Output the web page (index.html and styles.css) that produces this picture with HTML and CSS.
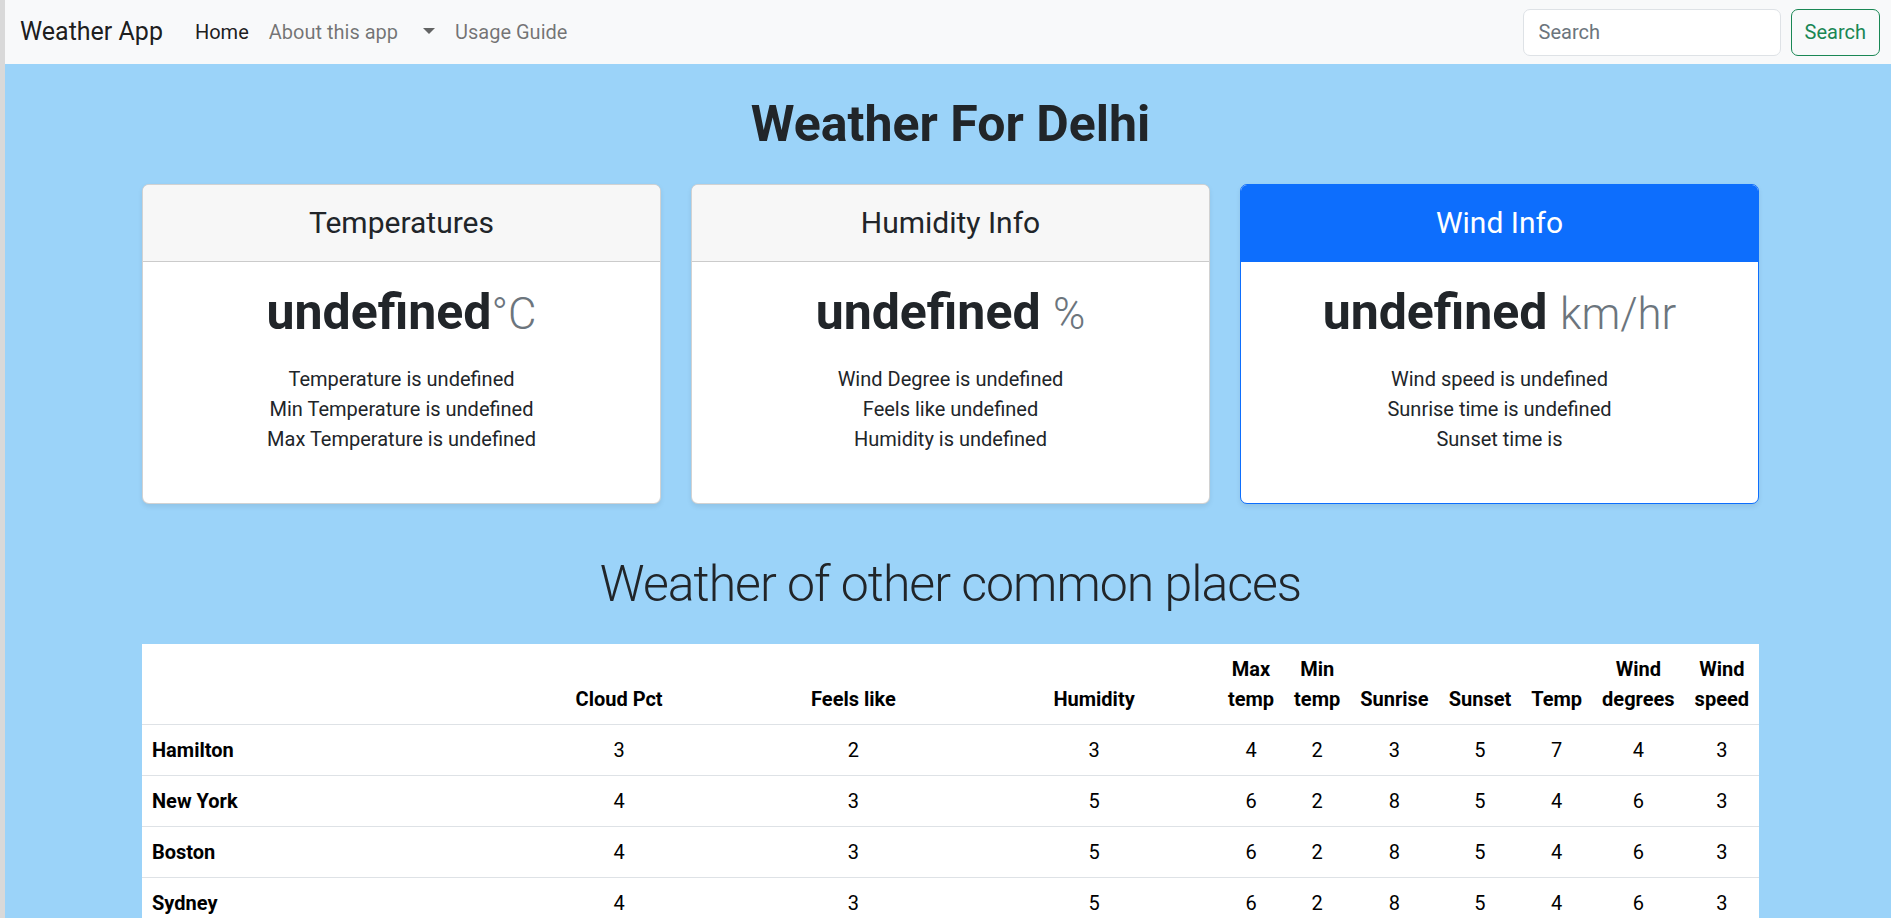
FILE: index.html
```html
<!DOCTYPE html>
<html lang="en">
<head>
<meta charset="utf-8">
<title>Weather App</title>
<link rel="stylesheet" href="styles.css">
</head>
<body>
<div class="app">
  <nav class="navbar">
    <a class="brand" href="#">Weather App</a>
    <ul class="nav">
      <li><a class="nav-link active" href="#">Home</a></li>
      <li><a class="nav-link" href="#">About this app</a></li>
      <li><a class="nav-link dropdown-toggle" href="#"></a></li>
      <li><a class="nav-link" href="#">Usage Guide</a></li>
    </ul>
    <form class="search">
      <input class="search-input" type="search" placeholder="Search">
      <button class="search-btn" type="button">Search</button>
    </form>
  </nav>
  <main class="main">
    <div class="container">
      <header class="page-header">
        <h1 class="page-title">Weather For Delhi</h1>
      </header>
      <div class="cards">
        <div class="card">
          <div class="card-header"><h4 class="card-heading">Temperatures</h4></div>
          <div class="card-body">
            <h1 class="card-title">undefined<small class="unit">°C</small></h1>
            <ul class="card-list">
              <li>Temperature is undefined</li>
              <li>Min Temperature is undefined</li>
              <li>Max Temperature is undefined</li>
            </ul>
          </div>
        </div>
        <div class="card">
          <div class="card-header"><h4 class="card-heading">Humidity Info</h4></div>
          <div class="card-body">
            <h1 class="card-title">undefined <small class="unit">%</small></h1>
            <ul class="card-list">
              <li>Wind Degree is undefined</li>
              <li>Feels like undefined</li>
              <li>Humidity is undefined</li>
            </ul>
          </div>
        </div>
        <div class="card card-primary">
          <div class="card-header"><h4 class="card-heading">Wind Info</h4></div>
          <div class="card-body">
            <h1 class="card-title">undefined <small class="unit">km/hr</small></h1>
            <ul class="card-list">
              <li>Wind speed is undefined</li>
              <li>Sunrise time is undefined</li>
              <li>Sunset time is</li>
            </ul>
          </div>
        </div>
      </div>
      <h2 class="section-title">Weather of other common places</h2>
      <table class="weather-table">
        <thead>
          <tr>
            <th class="col-name"></th>
            <th class="col-wide">Cloud Pct</th>
            <th class="col-wide">Feels like</th>
            <th class="col-wide">Humidity</th>
            <th>Max temp</th>
            <th>Min temp</th>
            <th>Sunrise</th>
            <th>Sunset</th>
            <th>Temp</th>
            <th>Wind degrees</th>
            <th>Wind speed</th>
          </tr>
        </thead>
        <tbody>
          <tr><th class="row-name">Hamilton</th><td>3</td><td>2</td><td>3</td><td>4</td><td>2</td><td>3</td><td>5</td><td>7</td><td>4</td><td>3</td></tr>
          <tr><th class="row-name">New York</th><td>4</td><td>3</td><td>5</td><td>6</td><td>2</td><td>8</td><td>5</td><td>4</td><td>6</td><td>3</td></tr>
          <tr><th class="row-name">Boston</th><td>4</td><td>3</td><td>5</td><td>6</td><td>2</td><td>8</td><td>5</td><td>4</td><td>6</td><td>3</td></tr>
          <tr><th class="row-name">Sydney</th><td>4</td><td>3</td><td>5</td><td>6</td><td>2</td><td>8</td><td>5</td><td>4</td><td>6</td><td>3</td></tr>
        </tbody>
      </table>
    </div>
  </main>
</div>
</body>
</html>
```

FILE: styles.css
```css
* { box-sizing: border-box; }

html, body {
  margin: 0;
  padding: 0;
}

body {
  font-family: Roboto, "Liberation Sans", sans-serif;
  font-size: 20px;
  line-height: 1.5;
  color: #212529;
  background: #9bd3f9;
}

.app {
  border-left: 5px solid #d9d9d9;
  min-height: 100vh;
}

/* Navbar */
.navbar {
  display: flex;
  align-items: center;
  height: 64px;
  padding: 8px 11px 8px 15px;
  background: #f8f9fa;
}

.brand {
  font-size: 25px;
  line-height: 37.5px;
  color: rgba(0, 0, 0, 0.9);
  text-decoration: none;
  margin-right: 22px;
}

.nav {
  display: flex;
  align-items: center;
  list-style: none;
  margin: 0;
  padding: 0;
}

.nav-link {
  display: block;
  padding: 10px;
  font-size: 20px;
  line-height: 30px;
  color: rgba(0, 0, 0, 0.55);
  text-decoration: none;
}

.nav-link.active {
  color: rgba(0, 0, 0, 0.9);
}

.dropdown-toggle::after {
  content: "";
  display: inline-block;
  margin-left: 5px;
  vertical-align: 5px;
  border-top: 6px solid rgba(0, 0, 0, 0.6);
  border-right: 6px solid transparent;
  border-left: 6px solid transparent;
}

.search {
  display: flex;
  gap: 10px;
  margin: 0 0 0 auto;
}

.search-input {
  width: 258px;
  height: 47px;
  padding: 7px 15px;
  font-family: inherit;
  font-size: 20px;
  color: #212529;
  background: #fff;
  border: 1px solid #dee2e6;
  border-radius: 7px;
}

.search-input::placeholder {
  color: #6c757d;
}

.search-btn {
  height: 47px;
  padding: 7px 13px;
  font-family: inherit;
  font-size: 20px;
  color: #198754;
  background: transparent;
  border: 1px solid #198754;
  border-radius: 7px;
}

/* Main */
.main {
  padding-left: 5px;
}

.container {
  width: 1617px;
  margin: 0 auto;
}

.page-header {
  padding: 30px 0 20px;
  text-align: center;
}

.page-title {
  margin: 0 0 10px;
  font-size: 50px;
  line-height: 60px;
  font-weight: 700;
  color: #212529;
}

.cards {
  display: grid;
  grid-template-columns: repeat(3, 1fr);
  column-gap: 30px;
  margin-bottom: 20px;
}

.card {
  background: #fff;
  border: 1px solid rgba(0, 0, 0, 0.175);
  border-radius: 7px;
  box-shadow: 0 2.5px 5px rgba(0, 0, 0, 0.075);
  overflow: hidden;
  text-align: center;
  margin-bottom: 30px;
}

.card-header {
  padding: 20px;
  background: #f7f7f7;
  border-bottom: 1px solid rgba(0, 0, 0, 0.175);
}

.card-heading {
  margin: 0;
  font-size: 30px;
  line-height: 36px;
  font-weight: 400;
}

.card-primary {
  border-color: #0d6efd;
}

.card-primary .card-header {
  background: #0d6efd;
  border-bottom-color: #0d6efd;
  color: #fff;
}

.card-body {
  padding: 20px;
}

.card-title {
  margin: 0 0 10px;
  font-size: 50px;
  line-height: 60px;
  font-weight: 700;
}

.unit {
  font-size: 0.875em;
  font-weight: 300;
  color: #6c757d;
}

.card-list {
  list-style: none;
  padding: 0;
  margin: 20px 0 29px;
}

.section-title {
  margin: 0 0 30px;
  font-size: 50px;
  line-height: 60px;
  font-weight: 300;
  letter-spacing: -1px;
  text-align: center;
}

/* Table */
.weather-table {
  width: 100%;
  border-collapse: collapse;
  background: #fff;
  color: #000;
  text-align: center;
}

.weather-table th,
.weather-table td {
  padding: 10px;
  line-height: 30px;
  border-bottom: 1px solid #dee2e6;
  vertical-align: top;
}

.weather-table thead th {
  vertical-align: bottom;
  font-weight: 700;
}

.col-name { width: 34%; }
.col-wide { width: 22%; }

.row-name {
  text-align: left;
  font-weight: 700;
}
```
